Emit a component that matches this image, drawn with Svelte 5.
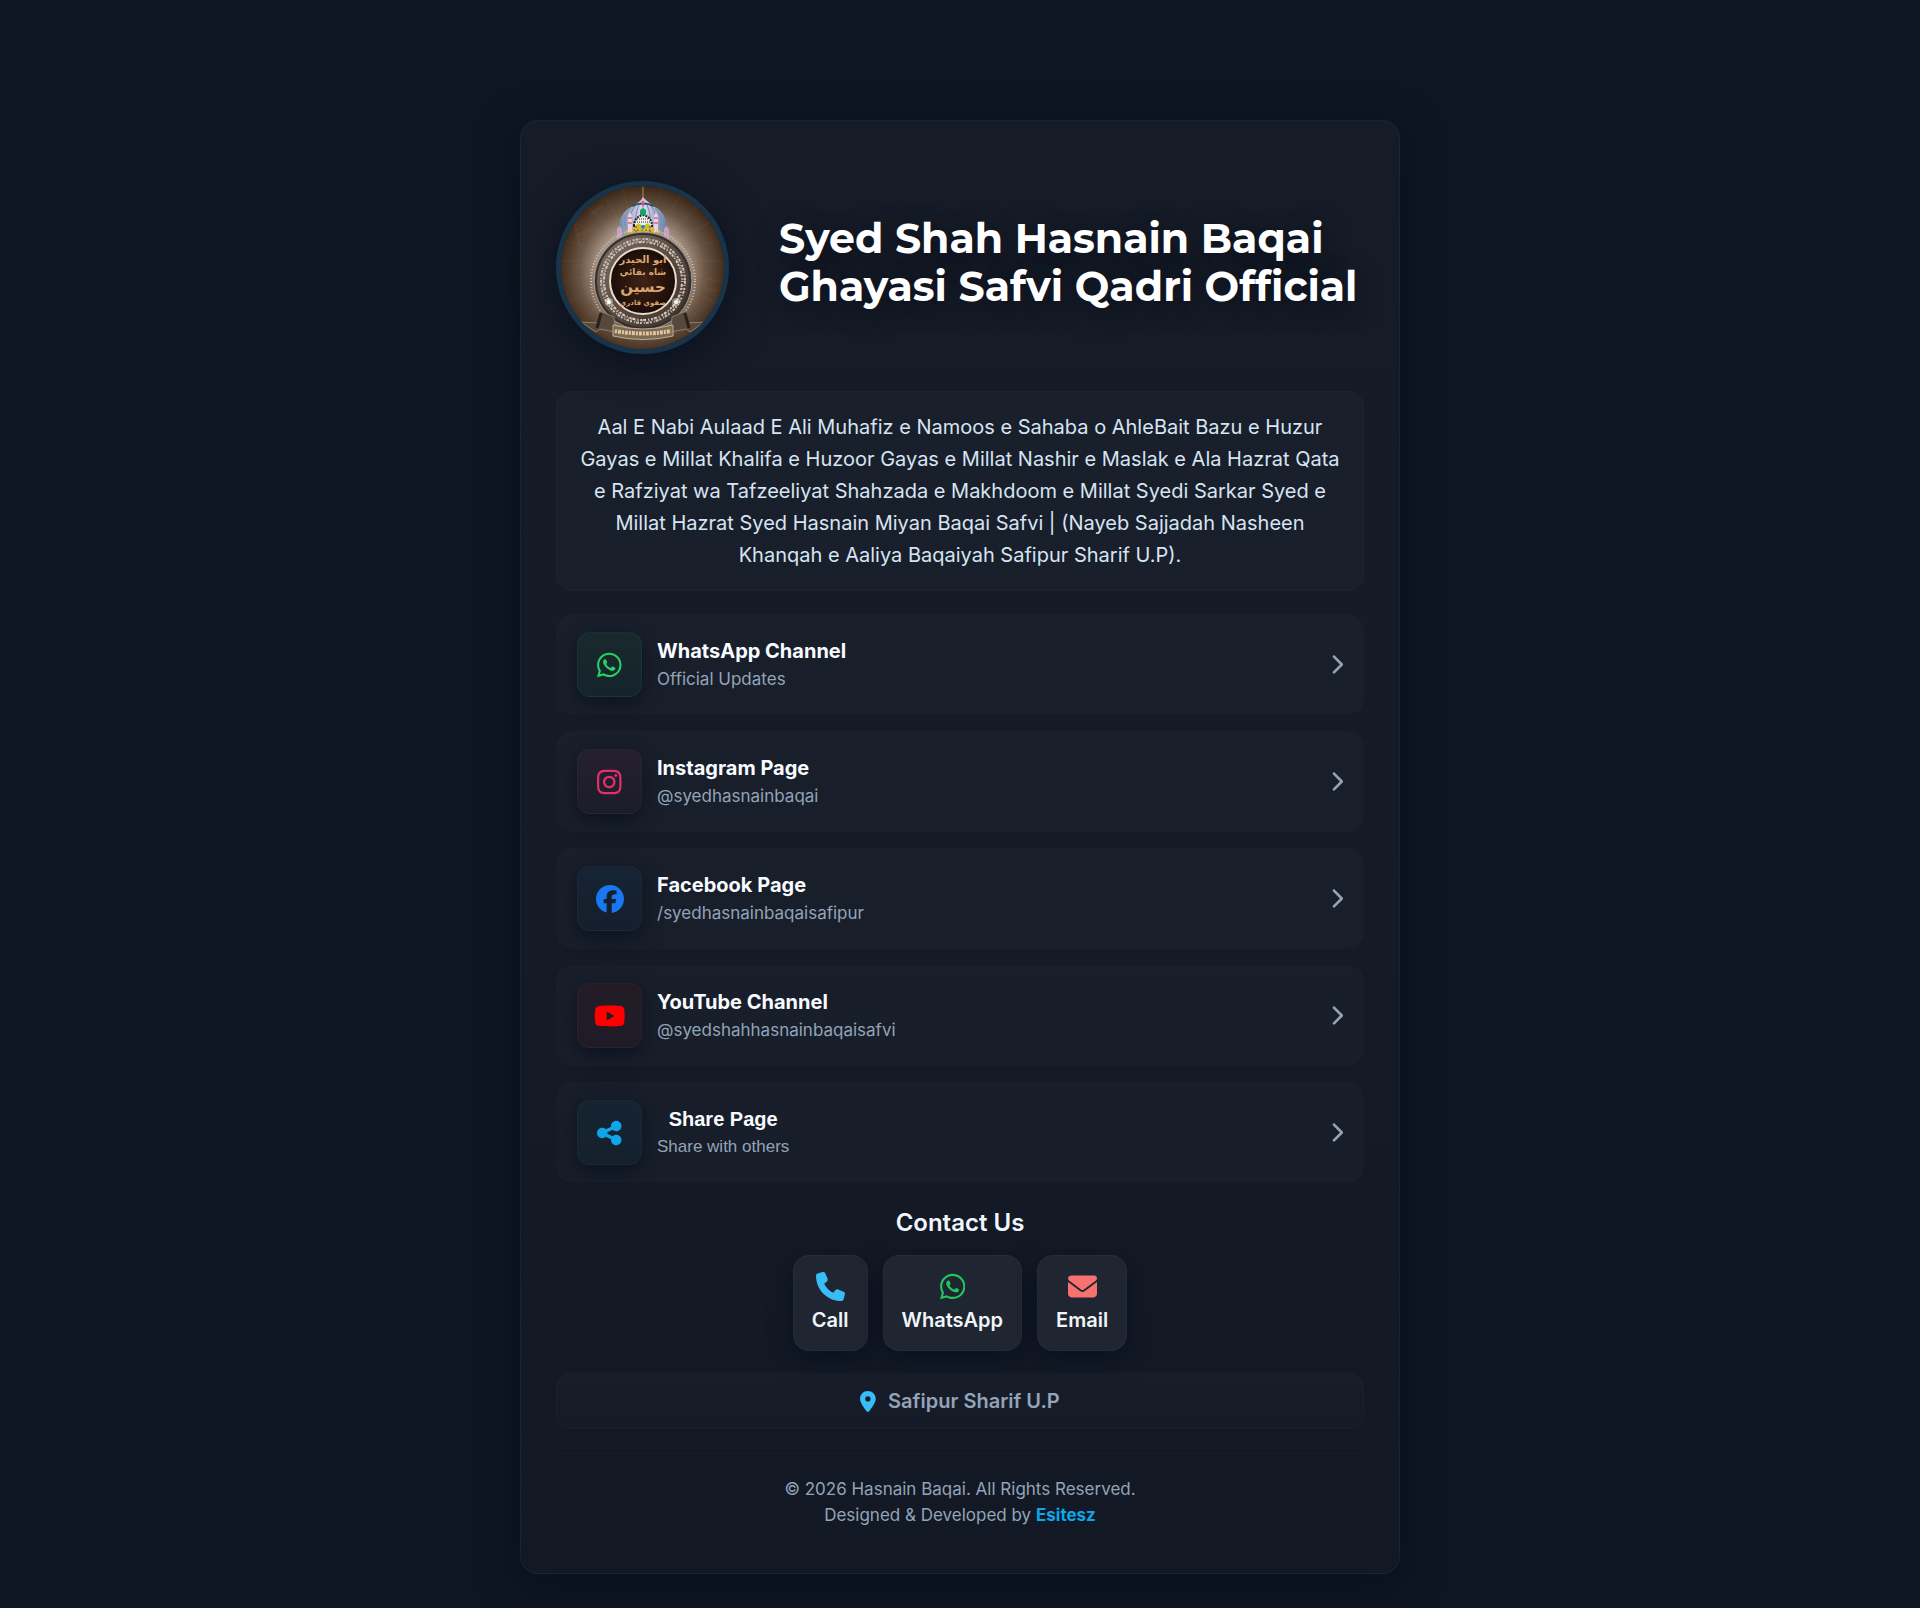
<script lang="ts">
	interface PageLink {
		kind: string;
		title: string;
		sub: string;
		href: string;
	}

	const links: PageLink[] = [
		{ kind: 'whatsapp', title: 'WhatsApp Channel', sub: 'Official Updates', href: '#whatsapp' },
		{ kind: 'instagram', title: 'Instagram Page', sub: '@syedhasnainbaqai', href: '#instagram' },
		{ kind: 'facebook', title: 'Facebook Page', sub: '/syedhasnainbaqaisafipur', href: '#facebook' },
		{ kind: 'youtube', title: 'YouTube Channel', sub: '@syedshahhasnainbaqaisafvi', href: '#youtube' }
	];

	const contacts = [
		{ kind: 'phone', label: 'Call', href: '#call' },
		{ kind: 'whatsapp', label: 'WhatsApp', href: '#chat' },
		{ kind: 'email', label: 'Email', href: '#email' }
	];

	// width of the viewBox and the outline, all 512 high
	const icons: Record<string, { w: number; d: string }> = {
		whatsapp: {
			w: 448,
			d: 'M380.9 97.1C339 55.1 283.2 32 223.9 32c-122.4 0-222 99.6-222 222 0 39.1 10.2 77.3 29.6 111L0 480l117.7-30.9c32.4 17.7 68.9 27 106.1 27h.1c122.3 0 224.1-99.6 224.1-222 0-59.3-25.2-115-67.1-157zm-157 341.6c-33.2 0-65.7-8.9-94-25.7l-6.7-4-69.8 18.3L72 359.2l-4.4-7c-18.5-29.4-28.2-63.3-28.2-98.2 0-101.7 82.8-184.5 184.6-184.5 49.3 0 95.6 19.2 130.4 54.1 34.8 34.9 56.2 81.2 56.1 130.5 0 101.8-84.9 184.6-186.6 184.6zm101.2-138.2c-5.5-2.8-32.8-16.2-37.9-18-5.1-1.9-8.8-2.8-12.5 2.8-3.7 5.6-14.3 18-17.6 21.8-3.2 3.7-6.5 4.2-12 1.4-32.6-16.3-54-29.1-75.5-66-5.7-9.8 5.7-9.1 16.3-30.3 1.8-3.7.9-6.9-.5-9.7-1.4-2.8-12.5-30.1-17.1-41.2-4.5-10.8-9.1-9.3-12.5-9.5-3.2-.2-6.9-.2-10.6-.2-3.7 0-9.7 1.4-14.8 6.9-5.1 5.6-19.4 19-19.4 46.3 0 27.3 19.9 53.7 22.6 57.4 2.8 3.7 39.1 59.7 94.8 83.8 35.2 15.2 49 16.5 66.6 13.9 10.7-1.6 32.8-13.4 37.4-26.4 4.6-13 4.6-24.1 3.2-26.4-1.3-2.5-5-3.9-10.5-6.6z'
		},
		instagram: {
			w: 448,
			d: 'M224.1 141c-63.6 0-114.9 51.3-114.9 114.9s51.3 114.9 114.9 114.9S339 319.5 339 255.9 287.7 141 224.1 141zm0 189.6c-41.1 0-74.7-33.5-74.7-74.7s33.5-74.7 74.7-74.7 74.7 33.5 74.7 74.7-33.6 74.7-74.7 74.7zm146.4-194.3c0 14.9-12 26.8-26.8 26.8-14.9 0-26.8-12-26.8-26.8s12-26.8 26.8-26.8 26.8 12 26.8 26.8zm76.1 27.2c-1.7-35.9-9.9-67.7-36.2-93.9-26.2-26.2-58-34.4-93.9-36.2-37-2.1-147.9-2.1-184.9 0-35.8 1.7-67.6 9.9-93.9 36.1s-34.4 58-36.2 93.9c-2.1 37-2.1 147.9 0 184.9 1.7 35.9 9.9 67.7 36.2 93.9s58 34.4 93.9 36.2c37 2.1 147.9 2.1 184.9 0 35.9-1.7 67.7-9.9 93.9-36.2 26.2-26.2 34.4-58 36.2-93.9 2.1-37 2.1-147.8 0-184.8zM398.8 388c-7.8 19.6-22.9 34.7-42.6 42.6-29.5 11.7-99.5 9-132.1 9s-102.7 2.6-132.1-9c-19.6-7.8-34.7-22.9-42.6-42.6-11.7-29.5-9-99.5-9-132.1s-2.6-102.7 9-132.1c7.8-19.6 22.9-34.7 42.6-42.6 29.5-11.7 99.5-9 132.1-9s102.7-2.6 132.1 9c19.6 7.8 34.7 22.9 42.6 42.6 11.7 29.5 9 99.5 9 132.1s2.7 102.7-9 132.1z'
		},
		facebook: {
			w: 512,
			d: 'M512 256C512 114.6 397.4 0 256 0S0 114.6 0 256C0 376 82.7 476.8 194.2 504.5V334.2H141.4V256h52.8V222.3c0-87.1 39.4-127.5 125-127.5c16.2 0 44.2 3.2 55.7 6.4V172c-6-.6-16.5-1-29.6-1c-42 0-58.2 15.9-58.2 57.2V256h83.6l-14.4 78.2H287V510.1C413.8 494.8 512 386.9 512 256z'
		},
		youtube: {
			w: 576,
			d: 'M549.7 124.1c-6.3-23.7-24.8-42.3-48.3-48.6C458.8 64 288 64 288 64S117.2 64 74.6 75.5c-23.5 6.3-42 24.9-48.3 48.6-11.4 42.9-11.4 132.3-11.4 132.3s0 89.4 11.4 132.3c6.3 23.7 24.8 41.5 48.3 47.8C117.2 448 288 448 288 448s170.8 0 213.4-11.5c23.5-6.3 42-24.2 48.3-47.8 11.4-42.9 11.4-132.3 11.4-132.3s0-89.4-11.4-132.3zm-317.5 213.5V175.2l142.7 81.2-142.7 81.2z'
		},
		share: {
			w: 448,
			d: 'M352 224c53 0 96-43 96-96s-43-96-96-96s-96 43-96 96c0 4 .2 8 .7 11.9l-94.1 47C145.4 170.2 121.9 160 96 160c-53 0-96 43-96 96s43 96 96 96c25.9 0 49.4-10.2 66.6-26.9l94.1 47c-.5 3.9-.7 7.8-.7 11.9c0 53 43 96 96 96s96-43 96-96s-43-96-96-96c-25.9 0-49.4 10.2-66.6 26.9l-94.1-47c.5-3.9 .7-7.8 .7-11.9s-.2-8-.7-11.9l94.1-47C302.6 213.8 326.1 224 352 224z'
		},
		phone: {
			w: 512,
			d: 'M164.9 24.6c-7.7-18.6-28-28.5-47.4-23.2l-88 24C12.1 30.2 0 46 0 64C0 311.4 200.6 512 448 512c18 0 33.8-12.1 38.6-29.5l24-88c5.3-19.4-4.6-39.7-23.2-47.4l-96-40c-16.3-6.8-35.2-2.1-46.3 11.6L304.7 368C234.3 334.7 177.3 277.7 144 207.3L193.3 167c13.7-11.2 18.4-30 11.6-46.3l-40-96z'
		},
		email: {
			w: 512,
			d: 'M48 64C21.5 64 0 85.5 0 112c0 15.1 7.1 29.3 19.2 38.4L236.8 313.6c11.4 8.5 27 8.5 38.4 0L492.8 150.4c12.1-9.1 19.2-23.3 19.2-38.4c0-26.5-21.5-48-48-48H48zM0 176V384c0 35.3 28.7 64 64 64H448c35.3 0 64-28.7 64-64V176L294.4 339.2c-22.8 17.1-54 17.1-76.8 0L0 176z'
		},
		pin: {
			w: 384,
			d: 'M215.7 499.2C267 435 384 279.4 384 192C384 86 298 0 192 0S0 86 0 192c0 87.4 117 243 168.3 307.2c12.3 15.3 35.1 15.3 47.4 0zM192 128a64 64 0 1 1 0 128 64 64 0 1 1 0-128z'
		},
		chevron: {
			w: 320,
			d: 'M310.6 233.4c12.5 12.5 12.5 32.8 0 45.3l-192 192c-12.5 12.5-32.8 12.5-45.3 0s-12.5-32.8 0-45.3L242.7 256 73.4 86.6c-12.5-12.5-12.5-32.8 0-45.3s32.8-12.5 45.3 0l192 192z'
		}
	};

	const rays = Array.from({ length: 24 }, (_, i) => i * 15);

	function share() {
		if (navigator.share) navigator.share({ title: document.title, url: location.href });
	}
</script>

{#snippet icon(kind: string)}
	<svg class="icon" viewBox="0 0 {icons[kind].w} 512" aria-hidden="true"><path d={icons[kind].d} /></svg>
{/snippet}

<main class="card">
	<header>
		<svg class="avatar" viewBox="0 0 163 163" role="img" aria-label="Emblem">
			<defs>
				<radialGradient id="glow" cx="50%" cy="52%" r="54%">
					<stop offset="0.5" stop-color="#a8978a" />
					<stop offset="0.72" stop-color="#6a5444" />
					<stop offset="1" stop-color="#352010" />
				</radialGradient>
				<linearGradient id="ring" x1="0" y1="0" x2="1" y2="1">
					<stop offset="0" stop-color="#83756b" />
					<stop offset="0.5" stop-color="#5b4b41" />
					<stop offset="1" stop-color="#3a2f2a" />
				</linearGradient>
				<linearGradient id="dome" x1="0" x2="1">
					<stop offset="0" stop-color="#6f8fae" />
					<stop offset="0.5" stop-color="#e4dcf0" />
					<stop offset="1" stop-color="#6684a4" />
				</linearGradient>
				<radialGradient id="disc">
					<stop offset="0" stop-color="#3f2415" />
					<stop offset="1" stop-color="#1b0c08" />
				</radialGradient>
			</defs>
			<rect width="163" height="163" fill="url(#glow)" />
			<g stroke="#dbc9b4" stroke-opacity="0.06">
				{#each rays as angle}
					<path d="M81 75V-10" transform="rotate({angle} 81 75)" />
				{/each}
			</g>
			<g fill="none" stroke="#8b6b4a" stroke-opacity="0.14" stroke-width="3">
				<path d="M14 38c4 15 2 21 10 26s3 18-12 16M30 28l12-8M17 49l20-8M145 64c-10 3-6 12 5 10M151 92c-12 0-10 15 4 12" />
			</g>

			<path d="M82 1v14" stroke="#b08a48" stroke-width="1" />
			<path d="M60 46C55 31 65 20 82 17c17 3 27 14 22 29z" fill="url(#dome)" />
			<path d="M66 44c-4-9-2-16 4-22M70 44c-3-10-1-17 4-24M75 44c-1-10 0-18 3-25M82 44V19M89 44c1-10 0-18-3-25M94 44c3-10 1-17-4-24M98 44c4-9 2-16-4-22" fill="none" stroke="#7f86b8" />
			<path d="M82 11l-2 3-6 5h17l-6-5z" fill="#d5b9e5" />
			<path d="M71 20q11-5 22 0" fill="none" stroke="#27566b" stroke-width="2" />
			<path d="M73 40q0-9 9-11q9 2 9 11z" fill="#f0f0e6" stroke="#1f2428" stroke-width="2" stroke-dasharray="2 1" />
			<path d="M74 36h16M76 33h12" stroke="#2b3234" stroke-dasharray="1 1" />
			<path d="M79 29v-5l3-2 3 2v5z" fill="#17a565" />
			<path d="M82 15v5" stroke="#e85679" stroke-width="2" />
			<path d="M65 47l3-8 5 3 4-5 5 3 5-3 4 5 5-3 3 8z" fill="#d6ba28" />
			<path d="M68 44h28M75 40v7M89 40v7" stroke="#764928" stroke-dasharray="2 2" />
			<circle cx="82" cy="41" r="2" fill="#1593ba" />
			<path d="M67 46V30l2-4 2 4v16zM93 46V30l2-4 2 4v16z" fill="#f0cfe2" />
			<path d="M67 32h4M67 37h4M93 32h4M93 37h4" stroke="#af3d59" />
			<path d="M56 53V43l2-3 3 3v10zM103 53V43l2-3 3 3v10z" fill="#c99fcb" />

			<circle cx="82" cy="95" r="52" fill="none" stroke="#d5c1a2" stroke-width="2" stroke-dasharray="1 2" />
			<circle cx="82" cy="95" r="49" fill="url(#ring)" stroke="#a39b93" />
			<circle cx="82" cy="95" r="47" fill="none" stroke="#33302f" stroke-width="2" />
			<circle cx="82" cy="95" r="42" fill="none" stroke="#c9beb4" stroke-width="2" stroke-dasharray="3 1 1 2 2 1" />
			<circle cx="82" cy="95" r="39" fill="none" stroke="#d8cfc6" stroke-width="2" stroke-dasharray="1 2 3 1 2 2" />
			<circle cx="82" cy="95" r="40" fill="none" stroke="#b5a79b" stroke-width="2" stroke-dasharray="1 3 1 2" />
			<circle cx="82" cy="95" r="33" fill="url(#disc)" stroke="#e6ddcd" stroke-width="2" />
			<g class="script">
				<text x="82" y="77" font-size="10">ابو الحيدر</text>
				<text x="82" y="89" font-size="9">شاه بقائي</text>
				<text x="82" y="106" font-size="15">حسين</text>
				<text x="82" y="119" font-size="7">صفوي قادري</text>
			</g>
			<circle cx="48" cy="116" r="4" fill="#fff7ea" fill-opacity="0.4" />
			<circle cx="115" cy="116" r="4" fill="#fff7ea" fill-opacity="0.4" />
			<circle cx="48" cy="116" r="2" fill="#fff" />
			<circle cx="115" cy="116" r="2" fill="#fff" />

			<path d="M20 136l17 1 2-12 14 6 1 15-15-3-4 3zM144 136l-17 1-2-12-14 6-1 15 15-3 4 3z" fill="#56483b" stroke="#8d7e6b" />
			<path d="M36 142l4-15M128 142l-4-15" stroke="#292018" stroke-width="3" />
			<path d="M52 139q30 8 60 0v11q-30 7-60 0z" fill="#7b6956" stroke="#c0ae92" />
			<path d="M54 145q28 5 56 0" fill="none" stroke="#e1c79b" stroke-width="4" stroke-dasharray="2 1 3 1" />
		</svg>
		<h1>Syed Shah Hasnain Baqai Ghayasi Safvi Qadri Official</h1>
	</header>

	<p class="bio">
		Aal E Nabi Aulaad E Ali Muhafiz e Namoos e Sahaba o AhleBait Bazu e Huzur Gayas e Millat Khalifa e
		Huzoor Gayas e Millat Nashir e Maslak e Ala Hazrat Qata e Rafziyat wa Tafzeeliyat Shahzada e Makhdoom
		e Millat Syedi Sarkar Syed e Millat Hazrat Syed Hasnain Miyan Baqai Safvi | (Nayeb Sajjadah Nasheen
		Khanqah e Aaliya Baqaiyah Safipur Sharif U.P).
	</p>

	<nav class="links" aria-label="Pages">
		{#each links as link}
			<a class="row" href={link.href}>
				<span class="tile {link.kind}">{@render icon(link.kind)}</span>
				<span class="text">
					<span class="title">{link.title}</span>
					<span class="sub">{link.sub}</span>
				</span>
				<span class="chevron">{@render icon('chevron')}</span>
			</a>
		{/each}
		<button class="row" type="button" onclick={share}>
			<span class="tile share">{@render icon('share')}</span>
			<span class="text">
				<span class="title">Share Page</span>
				<span class="sub">Share with others</span>
			</span>
			<span class="chevron">{@render icon('chevron')}</span>
		</button>
	</nav>

	<section class="contact">
		<h2>Contact Us</h2>
		<div class="contact-list">
			{#each contacts as contact}
				<a class="contact-btn {contact.kind}" href={contact.href}>
					{@render icon(contact.kind)}
					<span>{contact.label}</span>
				</a>
			{/each}
		</div>
	</section>

	<div class="place">
		{@render icon('pin')}
		<span>Safipur Sharif U.P</span>
	</div>

	<footer>
		© 2026 Hasnain Baqai. All Rights Reserved.<br />
		Designed &amp; Developed by <a href="#esitesz">Esitesz</a>
	</footer>
</main>

<style>
	:global(body) {
		margin: 0;
		background: #0f1623;
		font-family: Inter, 'Noto Sans', sans-serif;
		color: #f1f5f9;
	}

	.card {
		box-sizing: border-box;
		max-width: 880px;
		margin: 120px auto 35px;
		padding: 60px 35px 45px;
		border: 1px solid rgba(255, 255, 255, 0.04);
		border-radius: 18px;
		background: linear-gradient(180deg, #161c27, #121925);
		box-shadow: 0 10px 40px rgba(2, 8, 23, 0.5);
	}

	.icon {
		display: block;
		height: 1em;
		fill: currentColor;
	}

	header {
		display: flex;
		align-items: center;
		gap: 50px;
		margin-bottom: 37px;
	}

	.avatar {
		box-sizing: border-box;
		flex-shrink: 0;
		width: 173px;
		height: 173px;
		border: 5px solid #18344a;
		border-radius: 50%;
		box-shadow: 0 8px 40px rgba(2, 8, 23, 0.6);
	}

	.script {
		direction: rtl;
		fill: #d9a671;
		font-family: 'DejaVu Sans', sans-serif;
		font-weight: 700;
		text-anchor: middle;
	}

	h1 {
		margin: 0 0 12px;
		font-family: Montserrat, Inter, sans-serif;
		font-size: 41px;
		font-weight: 700;
		line-height: 48px;
		color: #fff;
		text-shadow: 0 6px 24px rgba(2, 8, 23, 0.5);
	}

	.bio {
		margin: 0 0 23px;
		padding: 19px 20px;
		border: 1px solid rgba(255, 255, 255, 0.02);
		border-radius: 16px;
		background: rgba(255, 255, 255, 0.02);
		font-size: 20px;
		font-weight: 400;
		line-height: 32px;
		text-align: center;
		color: #d6e4f3;
	}

	.links {
		display: flex;
		flex-direction: column;
		gap: 16px;
	}

	.row {
		display: flex;
		align-items: center;
		gap: 15px;
		padding: 18px 21px;
		border: none;
		border-radius: 16px;
		background: rgba(255, 255, 255, 0.02);
		color: inherit;
		text-decoration: none;
		cursor: pointer;
	}

	button.row {
		font-family: 'Liberation Sans', Arial, sans-serif;
	}

	.tile {
		display: flex;
		align-items: center;
		justify-content: center;
		box-sizing: border-box;
		width: 65px;
		height: 65px;
		border: 1px solid rgba(255, 255, 255, 0.03);
		border-radius: 13px;
		font-size: 28px;
		box-shadow: 0 6px 18px rgba(2, 8, 23, 0.5);
	}
	.tile.whatsapp {
		color: #25d366;
		border-color: rgba(37, 211, 102, 0.08);
		background: linear-gradient(180deg, #182a2d, #16232b);
	}
	.tile.instagram {
		color: #e1306c;
		background: linear-gradient(180deg, #26202d, #1c1c2a);
	}
	.tile.facebook {
		color: #1877f2;
		background: linear-gradient(180deg, #162433, #151e2c);
	}
	.tile.youtube {
		color: #f00;
		background: linear-gradient(180deg, #231c27, #1f1b26);
	}
	.tile.share {
		color: #0ea5e9;
		background: linear-gradient(180deg, #152431, #15202d);
	}

	.text {
		display: flex;
		flex-direction: column;
		gap: 4px;
	}

	.title {
		font-size: 20px;
		font-weight: 700;
		line-height: 24px;
		color: #f8fbff;
	}

	.sub {
		font-size: 17px;
		line-height: 24px;
		color: #94a3b8;
	}

	.chevron {
		margin-left: auto;
		font-size: 21px;
		color: #94a3b8;
	}

	.contact {
		margin-top: 24px;
	}

	h2 {
		margin: 0 0 16px;
		font-size: 24px;
		font-weight: 600;
		line-height: 32px;
		text-align: center;
		color: #f1f5ff;
	}

	.contact-list {
		display: flex;
		justify-content: center;
		flex-wrap: wrap;
		gap: 15px;
	}

	.contact-btn {
		display: flex;
		flex-direction: column;
		align-items: center;
		gap: 5px;
		padding: 16px 18px 15px;
		border: 1px solid rgba(255, 255, 255, 0.03);
		border-radius: 16px;
		background: #1f2631;
		box-shadow: 0 8px 24px rgba(2, 8, 23, 0.5);
		font-size: 20px;
		font-weight: 600;
		line-height: 29px;
		text-decoration: none;
	}
	.contact-btn span {
		color: #f1f5f9;
	}
	.contact-btn .icon {
		height: 29px;
	}
	.contact-btn.phone {
		color: #38bdf8;
	}
	.contact-btn.whatsapp {
		color: #22c55e;
	}
	.contact-btn.email {
		color: #f87171;
	}

	.place {
		display: flex;
		align-items: center;
		justify-content: center;
		gap: 12px;
		margin-top: 22px;
		padding: 13px 20px;
		border: 1px solid rgba(255, 255, 255, 0.02);
		border-radius: 16px;
		background: linear-gradient(180deg, rgba(255, 255, 255, 0.02), rgba(255, 255, 255, 0.01));
		font-size: 20px;
		font-weight: 600;
		line-height: 28px;
		color: #94a3b8;
	}
	.place .icon {
		height: 21px;
		color: #38bdf8;
	}

	footer {
		margin-top: 24px;
		padding-top: 22px;
		border-top: 1px solid rgba(255, 255, 255, 0.02);
		font-size: 17px;
		line-height: 26px;
		text-align: center;
		color: #94a3b8;
	}
	footer a {
		font-weight: 700;
		color: #0ea5e9;
		text-decoration: none;
	}

	@media (max-width: 700px) {
		.card {
			margin: 20px 12px;
			padding: 30px 18px;
		}

		header {
			flex-direction: column;
			gap: 24px;
			text-align: center;
		}

		h1 {
			font-size: 30px;
			line-height: 38px;
		}
	}
</style>
